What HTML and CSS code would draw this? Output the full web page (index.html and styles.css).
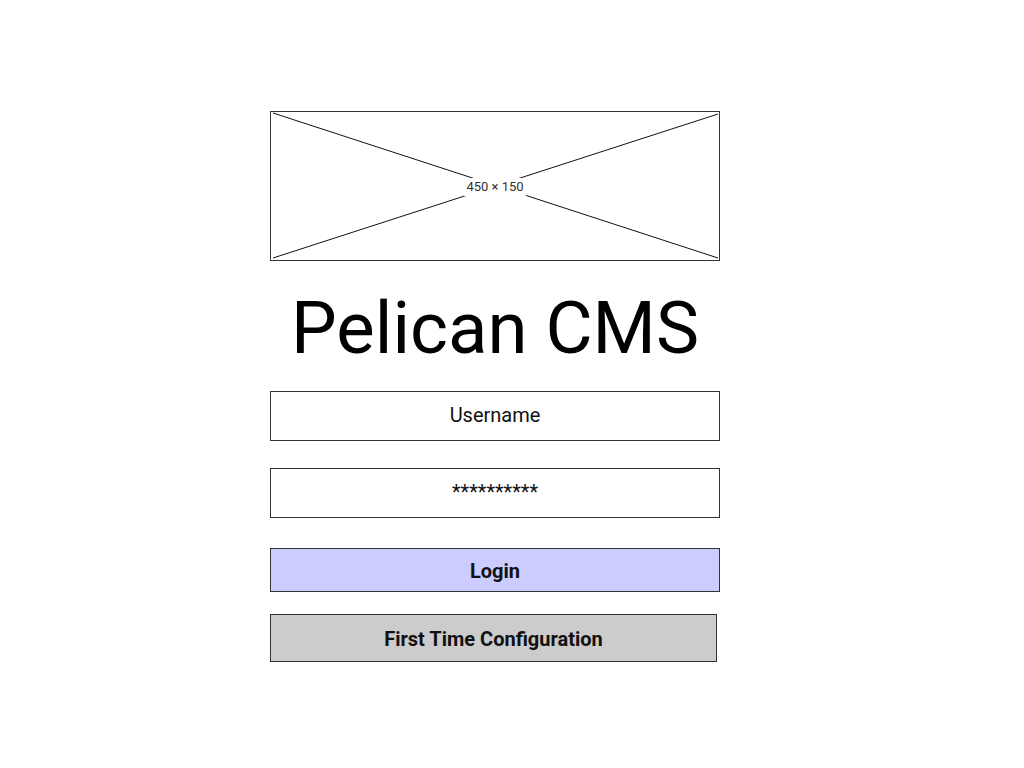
FILE: index.html
```html
<!DOCTYPE html>
<html>
<head>
<meta charset="utf-8">
<link rel="stylesheet" href="styles.css">
</head>
<body>
<div class="page">
  <div class="form">
    <div class="placeholder">
      <svg width="450" height="150" viewBox="0 0 450 150">
        <rect x="0.5" y="0.5" width="449" height="149" fill="#fff" stroke="#333" stroke-width="1"/>
        <line x1="3" y1="2" x2="448" y2="147" stroke="#111" stroke-width="1"/>
        <line x1="448" y1="3" x2="3" y2="147" stroke="#111" stroke-width="1"/>
        <rect x="194" y="67" width="62" height="18" fill="#fff"/>
        <text x="225" y="80" text-anchor="middle" class="ph-text">450 × 150</text>
      </svg>
    </div>
    <h1 class="title">Pelican CMS</h1>
    <div class="field field-user">Username</div>
    <div class="field field-pass">**********</div>
    <div class="btn btn-login">Login</div>
    <div class="btn btn-config">First Time Configuration</div>
  </div>
</div>
</body>
</html>
```
FILE: styles.css
```css
html, body {
  margin: 0;
  padding: 0;
  background: #fff;
}
body {
  font-family: Roboto, "Liberation Sans", sans-serif;
  color: #000;
}
.page {
  width: 1024px;
  height: 768px;
  padding-top: 111px;
  padding-left: 270px;
  box-sizing: border-box;
}
.form {
  width: 450px;
  display: flex;
  flex-direction: column;
}
.placeholder {
  height: 150px;
}
.placeholder svg {
  display: block;
}
.ph-text {
  font-family: Roboto, "Liberation Sans", sans-serif;
  font-size: 13px;
  fill: #333;
}
.title {
  margin: 26px 0 20px 0;
  font-size: 72.5px;
  font-weight: 400;
  line-height: 84px;
  height: 84px;
  text-align: center;
}
.field {
  height: 50px;
  box-sizing: border-box;
  border: 1px solid #333;
  display: flex;
  align-items: center;
  justify-content: center;
  font-size: 20px;
  color: #111;
}
.field-user {
  margin-bottom: 27px;
  padding-bottom: 2px;
}
.field-pass {
  margin-bottom: 30px;
  font-size: 20px;
  padding-bottom: 2px;
}
.btn {
  box-sizing: border-box;
  border: 1px solid #333;
  display: flex;
  align-items: center;
  justify-content: center;
  font-size: 20px;
  font-weight: 700;
  color: #111;
  padding-top: 2px;
}
.btn-login {
  height: 44px;
  background: #ccccff;
  margin-bottom: 22px;
}
.btn-config {
  width: 447px;
  height: 48px;
  background: #cccccc;
}
```
